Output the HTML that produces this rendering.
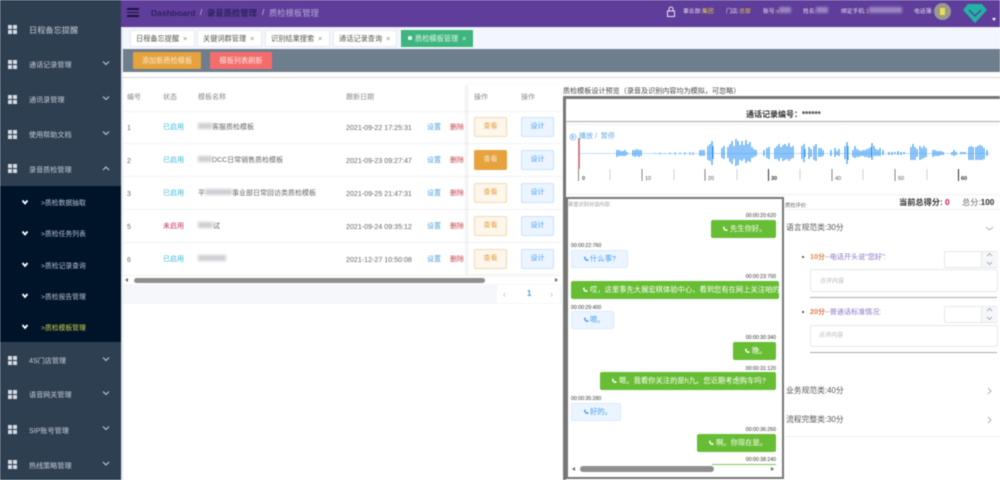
<!DOCTYPE html>
<html><head><meta charset="utf-8"><style>
html,body{margin:0;padding:0;background:#fff}
#p{position:relative;width:1000px;height:480px;overflow:hidden;background:#fff;font-family:"Liberation Sans","Noto Sans CJK SC",sans-serif;filter:blur(.4px)}
.b{position:absolute}
.t{position:absolute;white-space:nowrap;line-height:0;font-size:7px;color:#666;transform:translateY(1px)}
.d{font-size:7.100px}
.m{color:#c2ccd7;font-size:7.100px}
.s{color:#b8c2ce;font-size:6.800px}
.ic{position:absolute;left:8px;width:9px;height:9px;background:
linear-gradient(#d5dbe3,#d5dbe3) 0 0/4px 4px no-repeat,linear-gradient(#d5dbe3,#d5dbe3) 100% 0/4px 4px no-repeat,linear-gradient(#d5dbe3,#d5dbe3) 0 100%/4px 4px no-repeat,linear-gradient(#d5dbe3,#d5dbe3) 100% 100%/4px 4px no-repeat}
.tab{position:absolute;top:30px;height:17px;background:#fff;border:1px solid #e6eaf2;box-sizing:border-box;font-size:7.200px;color:#555;line-height:15px;padding-left:5px;white-space:nowrap}
.rd{position:absolute;height:1px;left:123px;width:345px;background:#f2f3f6}
.vw{position:absolute;left:474px;width:33px;height:20px;box-sizing:border-box;background:#fdf6ec;border:1px solid #f5dab1;border-radius:2px;color:#e6a23c;font-size:7px;text-align:center;line-height:18px}
.ds{position:absolute;left:521px;width:33px;height:20px;box-sizing:border-box;background:#ecf5ff;border:1px solid #c6e2ff;border-radius:2px;color:#409eff;font-size:7px;text-align:center;line-height:18px}
.g{position:absolute;background:#67bd33;border-radius:2px;color:#fff;font-size:7.300px;white-space:nowrap;overflow:hidden;box-sizing:border-box;padding-left:19px}
.w{position:absolute;background:#ecf5ff;border:1px solid #d9ecff;border-radius:2px;color:#409eff;font-size:7.300px;white-space:nowrap;box-sizing:border-box;padding-left:18px}
.tm{position:absolute;font-size:5.200px;color:#333;line-height:0;white-space:nowrap}
.blur{display:inline-block;height:0;position:relative;vertical-align:baseline}
.blur::after{content:"";position:absolute;left:0;right:0;top:-6px;height:6px;background:var(--c,#cfcfd4);filter:blur(1.200px)}
.ico{position:absolute;left:11px;top:50%;margin-top:-3px}
</style></head><body><div id="p">

<div class="b" style="left:0;top:0;width:121px;height:480px;background:#2f3f52"></div>
<div class="b" style="left:0;top:186px;width:121px;height:156px;background:#001429"></div>
<div class="b" style="left:121px;top:0;width:2px;height:480px;background:#e4e6ea"></div>

<div class="ic" style="top:25px"></div><div class="t" style="left:29px;top:30px;font-size:8.200px;color:#c2ccd7">日程备忘提醒</div>
<div class="ic" style="top:60px"></div><div class="t m" style="left:29px;top:64px">通话记录管理</div>
<div class="ic" style="top:95px"></div><div class="t m" style="left:29px;top:99px">通讯录管理</div>
<div class="ic" style="top:130px"></div><div class="t m" style="left:29px;top:134px">使用帮助文档</div>
<div class="ic" style="top:164px"></div><div class="t m" style="left:29px;top:169px">录音质检管理</div>
<div class="ic" style="top:356px"></div><div class="t m" style="left:29px;top:360px">4S门店管理</div>
<div class="ic" style="top:390px"></div><div class="t m" style="left:29px;top:394px">语音网关管理</div>
<div class="ic" style="top:425px"></div><div class="t m" style="left:29px;top:430px">SIP账号管理</div>
<div class="ic" style="top:460px"></div><div class="t m" style="left:29px;top:465px">热线策略管理</div>

<svg class="b" style="left:0;top:0" width="122" height="480" fill="none" stroke="#c5ced8" stroke-width="1">
<path d="M103 61.500l3 3 3-3M103 96.500l3 3 3-3M103 131.500l3 3 3-3M103 170l3-3 3 3M103 357.500l3 3 3-3M103 391.500l3 3 3-3M103 426.500l3 3 3-3M103 462l3 3 3-3"/>
<g stroke="#fff" stroke-width="1.800"><path d="M22.500 200.500l2.500 3 2.500-3M22.500 231.500l2.500 3 2.500-3M22.500 263l2.500 3 2.500-3M22.500 294l2.500 3 2.500-3M22.500 325l2.500 3 2.500-3"/></g>
</svg>
<div class="t s" style="left:41px;top:203px">&gt;质检数据抽取</div>
<div class="t s" style="left:41px;top:234px">&gt;质检任务列表</div>
<div class="t s" style="left:41px;top:266px">&gt;质检记录查询</div>
<div class="t s" style="left:41px;top:297px">&gt;质检报告管理</div>
<div class="t s" style="left:41px;top:328px;color:#c8d44a">&gt;质检模板管理</div>

<div class="b" style="left:121px;top:0;width:879px;height:27px;background:#5f3d9b"></div>
<div class="b" style="left:127px;top:8px;width:12px;height:1.500px;background:#1a1440"></div>
<div class="b" style="left:127px;top:11.500px;width:12px;height:1.500px;background:#1a1440"></div>
<div class="b" style="left:127px;top:15px;width:12px;height:1.500px;background:#1a1440"></div>
<div class="t" style="left:151px;top:12px;font-size:8.500px;font-weight:bold;color:#2e2360">Dashboard</div>
<div class="t" style="left:200px;top:12px;font-size:8px;color:#cfc8e2">/</div>
<div class="t" style="left:207px;top:12px;font-size:8.300px;color:#2e2360;font-weight:bold">录音质检管理</div>
<div class="t" style="left:262px;top:12px;font-size:8px;color:#cfc8e2">/</div>
<div class="t" style="left:269px;top:12px;font-size:8.300px;color:#b5a8d4">质检模板管理</div>

<svg class="b" style="left:666px;top:6px" width="10" height="12" fill="none" stroke="#e8e4f2" stroke-width="1"><rect x="1.500" y="5" width="7" height="5.500"/><path d="M3 5V3a2 2 0 0 1 4 0v2"/></svg>
<div class="t" style="left:683px;top:11px;font-size:5.800px;color:#e4dff0">事业部:<span style="color:#e8d23c">集团</span></div>
<div class="t" style="left:726px;top:11px;font-size:5.800px;color:#e4dff0">门店:<span style="color:#e8d23c">总部</span></div>
<div class="t" style="left:763px;top:11px;font-size:5.800px;color:#e4dff0">账号:<span style="color:#e8d23c">s</span><span class="blur" style="width:12px;--c:#9b86c4"></span></div>
<div class="t" style="left:803px;top:11px;font-size:5.800px;color:#e4dff0">姓名:<span class="blur" style="width:12px;--c:#9b86c4"></span></div>
<div class="t" style="left:841px;top:11px;font-size:5.800px;color:#e4dff0">绑定手机:<span style="color:#e8d23c">1</span><span class="blur" style="width:33px;--c:#9b86c4"></span></div>
<div class="t" style="left:914px;top:11px;font-size:5.800px;color:#e4dff0">电话薄:</div>
<div class="b" style="left:934px;top:3px;width:17px;height:17px;border-radius:50%;background:#9a9a92"></div>
<div class="b" style="left:940px;top:8px;width:5px;height:7px;background:#e8e04a"></div>
<svg class="b" style="left:962px;top:2px" width="26" height="22"><path d="M1 8L6 2H20L25 8L13 21Z" fill="#23b3a4"/><path d="M7 8l6 6 6-6" fill="none" stroke="#5f3d9b" stroke-width="1.300"/></svg>
<div class="b" style="left:992px;top:18px;width:0;height:0;border:2px solid transparent;border-top:3px solid #fff"></div>

<div class="b" style="left:123px;top:27px;width:877px;height:22px;background:#f3f6fd;border-top:1px solid #e8eaf0;box-sizing:border-box"></div>
<div class="tab" style="left:130px;width:65px">日程备忘提醒 <span style="color:#888;margin-left:2px">×</span></div>
<div class="tab" style="left:197px;width:65px">关键词群管理 <span style="color:#888;margin-left:2px">×</span></div>
<div class="tab" style="left:265px;width:65px">识别结果搜索 <span style="color:#888;margin-left:2px">×</span></div>
<div class="tab" style="left:333px;width:64px">通话记录查询 <span style="color:#888;margin-left:2px">×</span></div>
<div class="tab" style="left:401px;width:72px;background:#3eb57f;border-color:#3eb57f;color:#e6f6ee;padding-left:6px"><span style="display:inline-block;width:4px;height:4px;background:#fff;border-radius:50%;vertical-align:1px;margin-right:3px"></span>质检模板管理 <span style="margin-left:2px">×</span></div>

<div class="b" style="left:123px;top:49px;width:877px;height:23px;background:#6f7e8c"></div>
<div class="b" style="left:133px;top:52px;width:68px;height:17px;background:#e6a23c;border-radius:1px;color:#f9ecd6;font-size:7.200px;line-height:17px;text-align:center">添加新质检模板</div>
<div class="b" style="left:210px;top:52px;width:62px;height:17px;background:#f56c6c;border-radius:1px;color:#fde6e6;font-size:7.200px;line-height:17px;text-align:center">模板列表刷新</div>
<div class="b" style="left:123px;top:77px;width:877px;height:1px;background:#d8d8d8"></div>

<div class="t" style="left:127px;top:97px;color:#888">编号</div>
<div class="t" style="left:163px;top:97px;color:#888">状态</div>
<div class="t" style="left:198px;top:97px;color:#888">模板名称</div>
<div class="t" style="left:346px;top:97px;color:#888">跟新日期</div>
<div class="rd" style="top:111px"></div><div class="rd" style="top:143px"></div><div class="rd" style="top:176px"></div><div class="rd" style="top:209px"></div><div class="rd" style="top:242px"></div><div class="rd" style="top:275px"></div>

<div class="t d" style="left:127px;top:127px">1</div><div class="t" style="left:163px;top:127px;color:#36b9d8">已启用</div>
<div class="t" style="left:198px;top:127px"><span class="blur" style="width:14px"></span>客服质检模板</div>
<div class="t d" style="left:346px;top:127px">2021-09-22 17:25:31</div>
<div class="t d" style="left:127px;top:160px">2</div><div class="t" style="left:163px;top:160px;color:#36b9d8">已启用</div>
<div class="t" style="left:198px;top:160px"><span class="blur" style="width:14px"></span>DCC日常销售质检模板</div>
<div class="t d" style="left:346px;top:160px">2021-09-23 09:27:47</div>
<div class="t d" style="left:127px;top:193px">3</div><div class="t" style="left:163px;top:193px;color:#36b9d8">已启用</div>
<div class="t" style="left:198px;top:193px">平<span class="blur" style="width:27px"></span>事业部日常回访类质检模板</div>
<div class="t d" style="left:346px;top:193px">2021-09-25 21:47:31</div>
<div class="t d" style="left:127px;top:226px">5</div><div class="t" style="left:163px;top:226px;color:#c2335c">未启用</div>
<div class="t" style="left:198px;top:226px"><span class="blur" style="width:15px"></span>试</div>
<div class="t d" style="left:346px;top:226px">2021-09-24 09:35:12</div>
<div class="t d" style="left:127px;top:259px">6</div><div class="t" style="left:163px;top:259px;color:#36b9d8">已启用</div>
<div class="t" style="left:198px;top:259px"><span class="blur" style="width:28px"></span></div>
<div class="t d" style="left:346px;top:259px">2021-12-27 10:50:08</div>

<div class="t" style="left:427px;top:127px;color:#4a9fdc">设置</div><div class="t" style="left:450px;top:127px;color:#c4474f">删除</div>
<div class="t" style="left:427px;top:160px;color:#4a9fdc">设置</div><div class="t" style="left:450px;top:160px;color:#c4474f">删除</div>
<div class="t" style="left:427px;top:193px;color:#4a9fdc">设置</div><div class="t" style="left:450px;top:193px;color:#c4474f">删除</div>
<div class="t" style="left:427px;top:226px;color:#4a9fdc">设置</div><div class="t" style="left:450px;top:226px;color:#c4474f">删除</div>
<div class="t" style="left:427px;top:259px;color:#4a9fdc">设置</div><div class="t" style="left:450px;top:259px;color:#c4474f">删除</div>

<div class="b" style="left:468px;top:84px;width:94px;height:190px;background:#fff;box-shadow:-2px 1px 4px rgba(0,0,0,.08)"></div>
<div class="t" style="left:474px;top:97px;color:#888">操作</div>
<div class="t" style="left:521px;top:97px;color:#888">操作</div>
<div class="b" style="left:468px;top:111px;width:94px;height:1px;background:#f2f3f6"></div>
<div class="b" style="left:468px;top:143px;width:94px;height:1px;background:#f2f3f6"></div>
<div class="b" style="left:468px;top:176px;width:94px;height:1px;background:#f2f3f6"></div>
<div class="b" style="left:468px;top:209px;width:94px;height:1px;background:#f2f3f6"></div>
<div class="b" style="left:468px;top:242px;width:94px;height:1px;background:#f2f3f6"></div>
<div class="vw" style="top:117px">查看</div><div class="ds" style="top:117px">设计</div>
<div class="vw" style="top:150px;background:#e6a23c;border-color:#e6a23c;color:#f9ecd6">查看</div><div class="ds" style="top:150px">设计</div>
<div class="vw" style="top:183px">查看</div><div class="ds" style="top:183px">设计</div>
<div class="vw" style="top:216px">查看</div><div class="ds" style="top:216px">设计</div>
<div class="vw" style="top:249px">查看</div><div class="ds" style="top:249px">设计</div>

<div class="b" style="left:134px;top:277.500px;width:351px;height:5px;background:#8f8f8f;border-radius:3px"></div>
<div class="b" style="left:125px;top:278px;width:0;height:0;border:2px solid transparent;border-right:3px solid #666;border-left:0"></div>
<div class="b" style="left:555px;top:278px;width:0;height:0;border:2px solid transparent;border-left:3px solid #666;border-right:0"></div>
<div class="b" style="left:123px;top:284px;width:439px;height:20px;background:#f5f7fb"></div>
<div class="b" style="left:497px;top:285px;width:63px;height:18px;background:#fff"></div>
<div class="t" style="left:503px;top:293px;font-size:9px;color:#bbb">‹</div>
<div class="t" style="left:527px;top:293px;font-size:8px;color:#4a9fdc;font-weight:bold">1</div>
<div class="t" style="left:550px;top:293px;font-size:9px;color:#bbb">›</div>

<div class="t" style="left:563px;top:90px;font-size:7.100px;color:#444">质检模板设计预览（录音及识别内容均为模拟，可忽略）</div>
<div class="b" style="left:563px;top:96px;width:437px;height:384px;box-sizing:border-box;border:3px solid #777;border-right:0;border-bottom:0"></div>
<div class="t" style="left:746px;top:114px;font-size:8px;font-weight:bold;color:#333">通话记录编号：******</div>
<div class="b" style="left:566px;top:121px;width:434px;height:1px;background:#aaa"></div>
<div class="b" style="left:566px;top:125px;width:434px;height:69px;background:#fff;box-shadow:0 0 3px rgba(0,0,0,.12)"></div>
<svg class="b" style="left:569px;top:133px" width="8" height="8" fill="none" stroke="#7ab8ee" stroke-width=".8"><circle cx="4" cy="4" r="3"/><path d="M3 2.500l2 1.500-2 1.500z"/></svg>
<div class="t" style="left:579px;top:136px;color:#5aa7e8">播放 / &nbsp;暂停</div>
<svg class="b" style="left:566px;top:125px" width="434" height="70" fill="none">
<g transform="translate(-566 -125)">
<path d="M579 153.500H990" stroke="#a8d2f8" stroke-width=".8"/>
<path stroke="#3f9ef5" stroke-width="1.200" d="M617 150v7M619 150v6M621 151v5M623 151v5M625 150v6M627 152v3M633 150v6M635 150v7M637 149v7M639 150v7M641 150v6M700 150v6M702 150v6M704 150v6M708 146v14M710 144v17M712 141v24M713 146v13M722 148v10M724 146v13M728 147v11M730 144v18M732 141v23M734 146v13M736 139v27M738 141v24M740 145v15M742 141v20M744 145v14M746 140v23M748 144v17M750 142v20M752 147v11M754 149v8M756 150v6M764 150v6M767 148v10M769 147v12M775 148v11M777 146v13M779 144v17M781 147v11M783 145v16M785 144v16M787 146v13M789 143v18M791 147v12M793 146v12M802 146v13M804 144v18M805 149v8M809 147v12M811 149v8M814 146v14M816 144v17M819 148v9M821 148v9M823 150v6M831 150v6M835 148v9M837 151v4M839 149v7M845 146v13M847 142v22M848 146v14M853 150v7M855 146v12M857 149v8M859 150v7M861 151v5M863 150v6M865 150v7M867 149v8M869 148v10M871 147v10M872 143v17M874 146v10M876 149v7M878 150v6M880 148v8M883 150v5M889 152v3M892 152v3M895 152v2M898 151v4M901 152v3M904 152v2M911 147v13M913 144v16M915 147v13M917 149v8M920 146v14M922 148v11M924 146v12M926 148v9M933 150v7M935 150v6M937 151v5M939 151v5M941 151v4M943 152v3M952 152v3M954 150v6M956 152v3M961 152v2M963 152v2M965 152v2M969 147v13M971 146v14M973 147v13M976 147v13M978 146v14M980 145v15M982 146v14M984 148v11M987 150v6"/>
<path stroke="#6cb4f4" stroke-width="1" d="M655 153v1M660 152.500v2M665 153v1M670 152.500v2M675 152v3M680 152.500v2M685 152v3M690 152v3M693 152v3"/>
<path d="M579 138V169" stroke="#c4636a" stroke-width="1.600"/>
<path stroke="#c8c8c8" stroke-width=".8" d="M610 169v11M674 169v11M737 169v11M800 169v11M863 169v11M927 169v11"/>
<path stroke="#777" stroke-width=".9" d="M578.500 169v12M642 169v12M705 169v12M832 169v12M895 169v12"/>
<path stroke="#333" stroke-width="1" d="M768.500 169v12M958.500 169v12"/>
</g></svg>
<div class="t" style="left:582px;top:178px;font-size:5.500px;color:#555;font-weight:bold">0</div>
<div class="t" style="left:645px;top:178px;font-size:5.500px;color:#555">10</div>
<div class="t" style="left:708px;top:178px;font-size:5.500px;color:#555">20</div>
<div class="t" style="left:771px;top:178px;font-size:5.500px;color:#333;font-weight:bold">30</div>
<div class="t" style="left:835px;top:178px;font-size:5.500px;color:#555">40</div>
<div class="t" style="left:898px;top:178px;font-size:5.500px;color:#555">50</div>
<div class="t" style="left:961px;top:178px;font-size:5.500px;color:#333;font-weight:bold">60</div>

<div class="b" style="left:566px;top:197px;width:218px;height:282px;box-sizing:border-box;border:2px solid #777;background:#fff;overflow:hidden"></div>
<div class="t" style="left:568px;top:204px;font-size:5.200px;color:#999">录音识别对话内容:</div>
<svg width="0" height="0" style="position:absolute"><defs><path id="ph" d="M1 1c0 2.500 1.500 4 4 4l.8-1.200-1.500-.8-.6.5c-.6-.3-1-.8-1.200-1.300l.5-.6L2.200.5z"/></defs></svg>

<div class="tm" style="right:224px;top:216px">00:00:20:620</div>
<div class="g" style="left:711px;top:219.500px;width:65px;height:18px;line-height:18px"><svg class="ico" width="6" height="6" fill="#fff"><use href="#ph"/></svg>先生你好。</div>
<div class="tm" style="left:571px;top:246px">00:00:22:760</div>
<div class="w" style="left:571px;top:250px;width:57px;height:18px;line-height:16px"><svg class="ico" width="6" height="6" fill="#409eff"><use href="#ph"/></svg>什么事?</div>
<div class="tm" style="right:224px;top:277px">00:00:23:700</div>
<div class="g" style="left:571px;top:281px;width:208px;height:18px;line-height:18px"><svg class="ico" width="6" height="6" fill="#fff"><use href="#ph"/></svg>哎，这里事先大展宏棋体验中心，看到您有在网上关注咱的车</div>
<div class="tm" style="left:571px;top:308px">00:00:29:400</div>
<div class="w" style="left:571px;top:311px;width:43px;height:18px;line-height:16px"><svg class="ico" width="6" height="6" fill="#409eff"><use href="#ph"/></svg>嗯。</div>
<div class="tm" style="right:224px;top:338px">00:00:30:340</div>
<div class="g" style="left:733px;top:342px;width:43px;height:17.500px;line-height:18px"><svg class="ico" width="6" height="6" fill="#fff"><use href="#ph"/></svg>晚。</div>
<div class="tm" style="right:224px;top:369px">00:00:31:120</div>
<div class="g" style="left:600px;top:372px;width:176px;height:18px;line-height:18px"><svg class="ico" width="6" height="6" fill="#fff"><use href="#ph"/></svg>嗯。我看你关注的是h九。您近期考虑购车吗?</div>
<div class="tm" style="left:571px;top:399px">00:00:35:280</div>
<div class="w" style="left:571px;top:403px;width:50px;height:18px;line-height:16px"><svg class="ico" width="6" height="6" fill="#409eff"><use href="#ph"/></svg>好的。</div>
<div class="tm" style="right:224px;top:430px">00:00:36:260</div>
<div class="g" style="left:697px;top:433.500px;width:79px;height:18px;line-height:18px"><svg class="ico" width="6" height="6" fill="#fff"><use href="#ph"/></svg>啊。你现在是。</div>
<div class="tm" style="right:224px;top:460px">00:00:38:240</div>
<div class="b" style="left:712px;top:464px;width:64px;height:1px;background:#7fc65a"></div>
<div class="b" style="left:580px;top:466px;width:134px;height:5.500px;background:#8f8f8f;border-radius:3px"></div>
<div class="b" style="left:572px;top:467px;width:0;height:0;border:2px solid transparent;border-right:3px solid #666;border-left:0"></div>
<div class="b" style="left:771px;top:467px;width:0;height:0;border:2px solid transparent;border-left:3px solid #666;border-right:0"></div>

<div class="t" style="left:785px;top:205px;font-size:5.200px;color:#666">质检评价:</div>
<div class="t" style="left:899px;top:202px;font-size:8.200px;font-weight:bold;color:#333">当前总得分: <span style="color:#d3133a">0</span></div>
<div class="t" style="left:962px;top:202px;font-size:8.200px;color:#666">总分:<b style="color:#333">100</b></div>
<div class="b" style="left:786px;top:209px;width:214px;height:1px;background:#f0f0f0"></div>
<div class="t" style="left:786px;top:227px;font-size:7.800px;color:#555">语言规范类:30分</div>
<div class="b" style="left:802px;top:256px;width:2px;height:2px;background:#333;border-radius:50%"></div>
<div class="t" style="left:810px;top:256px;font-size:7.100px;color:#8b74c8"><span style="color:#e08a4c;font-weight:bold">10分</span>--电话开头说"您好":</div>
<div class="b" style="left:944px;top:251px;width:54px;height:17px;box-sizing:border-box;border:1px solid #e4e7ed;border-radius:2px"></div>
<div class="b" style="left:981px;top:252px;width:16px;height:15px;background:#f5f7fa;border-left:1px solid #e4e7ed"></div>
<div class="b" style="left:810px;top:269px;width:188px;height:23px;box-sizing:border-box;border:1px solid #e4e7ed;border-radius:3px"></div>
<div class="t" style="left:820px;top:281px;font-size:6px;color:#b5b5b5">点评内容</div>
<div class="b" style="left:810px;top:297px;width:187px;height:1px;background:#aaa"></div>
<div class="b" style="left:802px;top:311px;width:2px;height:2px;background:#333;border-radius:50%"></div>
<div class="t" style="left:810px;top:311px;font-size:7.100px;color:#8b74c8"><span style="color:#e07a4c;font-weight:bold">20分</span>--普通话标准情况:</div>
<div class="b" style="left:944px;top:306px;width:54px;height:17px;box-sizing:border-box;border:1px solid #e4e7ed;border-radius:2px"></div>
<div class="b" style="left:981px;top:307px;width:16px;height:15px;background:#f5f7fa;border-left:1px solid #e4e7ed"></div>
<div class="b" style="left:810px;top:325px;width:188px;height:22px;box-sizing:border-box;border:1px solid #e4e7ed;border-radius:3px"></div>
<div class="t" style="left:819px;top:335px;font-size:6px;color:#b5b5b5">点评内容</div>
<div class="b" style="left:810px;top:352px;width:187px;height:1px;background:#aaa"></div>
<svg class="b" style="left:980px;top:220px" width="20" height="205" fill="none" stroke="#999" stroke-width=".8">
<path d="M6 7l3.500 3 3.500-3M7 36l2.500-2.500 2.500 2.500M7 42l2.500 2.500 2.500-2.500M7 91l2.500-2.500 2.500 2.500M7 97l2.500 2.500 2.500-2.500M8 168l3 3-3 3M8 197l3 3-3 3"/></svg>
<div class="t" style="left:786px;top:390px;font-size:7.800px;color:#555">业务规范类:40分</div>
<div class="t" style="left:786px;top:419px;font-size:7.800px;color:#555">流程完整类:30分</div>
<div class="b" style="left:786px;top:436px;width:214px;height:1px;background:#eee"></div>

</div></body></html>
